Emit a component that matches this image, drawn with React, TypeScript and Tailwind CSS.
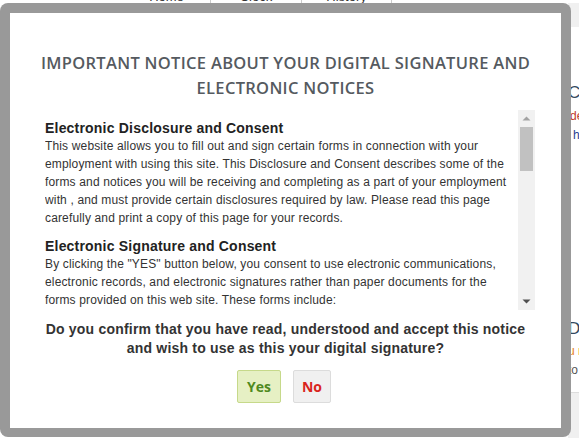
import React from "react";

const p1 = [
  "This website allows you to fill out and sign certain forms in connection with your",
  "employment with using this site. This Disclosure and Consent describes some of the",
  "forms and notices you will be receiving and completing as a part of your employment",
  "with , and must provide certain disclosures required by law. Please read this page",
  "carefully and print a copy of this page for your records.",
];
const p2 = [
  "By clicking the \"YES\" button below, you consent to use electronic communications,",
  "electronic records, and electronic signatures rather than paper documents for the",
  "forms provided on this web site. These forms include:",
];

export default function App() {
  return (
    <div className="relative w-[579px] h-[438px] overflow-hidden bg-white font-['Liberation_Sans',Arial,sans-serif]">
      {/* background page */}
      <div className="flex flex-col">
        <div className="flex h-[14px] -mt-[10px] ml-[123px] text-[13px] text-[#333]">
          <div className="w-[88px] border-r border-[#ccc] text-center leading-[14px]">Home</div>
          <div className="w-[91px] border-r border-[#ccc] text-center leading-[14px]">Clock</div>
          <div className="w-[90px] border-r border-[#ccc] text-center leading-[14px]">History</div>
        </div>
        <div className="flex">
          <div className="w-[568px] shrink-0" />
          <div className="flex flex-col w-[200px]">
            <div className="h-[24px] mt-[-1px] bg-[#f0f0f0]" />
            <div className="mt-[56px] text-[17px] leading-[20px] text-[#34495e]">CT</div>
            <div className="mt-[4px] pl-[2px] text-[12px] leading-[18px] text-[#c0392b]">de</div>
            <div className="mt-[1px] text-[12px] leading-[18px] text-[#2c3e90] pl-[5px]">h</div>
            <div className="mt-[175px] text-[17px] leading-[20px] text-[#34495e]">D</div>
            <div className="mt-[3px] text-[12px] leading-[18px] text-[#e67e22]">u r</div>
            <div className="text-[12px] leading-[20px] text-[#555]">to</div>
            <div className="mt-[12px] h-[60px] bg-[#f0f0f0] border-t border-[#ddd]" />
          </div>
        </div>
      </div>

      {/* modal */}
      <div className="absolute left-0 top-[3px] w-[571px] h-[434px] rounded-[8px] bg-[#999] p-[10px] pb-[9px]">
        <div className="w-full h-full bg-white flex flex-col items-center">
          <h1 className="mt-[37px] w-[530px] text-center text-[16.5px] leading-[25px] font-semibold tracking-[0.3px] text-[#555a60] font-['Open_Sans',sans-serif]">
            IMPORTANT NOTICE ABOUT YOUR DIGITAL SIGNATURE AND ELECTRONIC NOTICES
          </h1>
          <div className="mt-[10px] self-start ml-[35px] flex w-[490px] h-[200px]">
            <div className="w-[473px] h-full overflow-hidden pt-[10px] text-[12px] leading-[18px] text-[#333] tracking-[0.15px]">
              <h2 className="text-[14px] leading-[17px] font-bold text-[#222] tracking-[0.2px]">Electronic Disclosure and Consent</h2>
              <p className="mb-[11px]">
                {p1.map((l, i) => (
                  <span key={i} className="block whitespace-nowrap">{l}</span>
                ))}
              </p>
              <h2 className="text-[14px] leading-[17px] font-bold text-[#222] tracking-[0.2px]">Electronic Signature and Consent</h2>
              <p className="mb-[11px]">
                {p2.map((l, i) => (
                  <span key={i} className="block whitespace-nowrap">{l}</span>
                ))}
              </p>
            </div>
            <div className="w-[17px] h-full bg-[#f1f1f1] flex flex-col items-center">
              <div className="h-[17px] w-full flex items-center justify-center">
                <svg width="9" height="5" viewBox="0 0 9 5"><path d="M0.5 4.5 L4.5 0.5 L8.5 4.5 Z" fill="#a3a3a3" /></svg>
              </div>
              <div className="w-[13px] h-[44px] bg-[#c1c1c1]" />
              <div className="flex-1" />
              <div className="h-[17px] w-full flex items-center justify-center">
                <svg width="9" height="5" viewBox="0 0 9 5"><path d="M0.5 0.5 L4.5 4.5 L8.5 0.5 Z" fill="#505050" /></svg>
              </div>
            </div>
          </div>
          <p className="mt-[10px] w-[500px] text-center text-[14px] leading-[19px] font-bold text-[#333] tracking-[0.2px]">
            Do you confirm that you have read, understood and accept this notice and wish to use as this your digital signature?
          </p>
          <div className="mt-[12px] -ml-[3px] flex gap-[12px] font-['Open_Sans',sans-serif] text-[14px] font-bold">
            <button className="w-[44px] h-[33px] rounded-[2px] border border-[#c6d98a] bg-[#e6f0c4] text-[#4f8a1e]">Yes</button>
            <button className="w-[38px] h-[33px] rounded-[2px] border border-[#dcdcdc] bg-[#f0f0f0] text-[#d9251d]">No</button>
          </div>
        </div>
      </div>
    </div>
  );
}
